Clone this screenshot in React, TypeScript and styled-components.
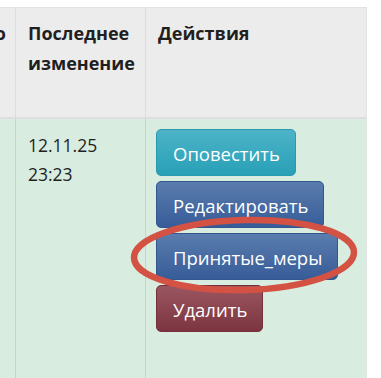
import React from "react";
import styled, { createGlobalStyle } from "styled-components";

const Global = createGlobalStyle`
  html, body { margin: 0; padding: 0; background: #fff; }
  body { font-family: "Open Sans", "Noto Sans", sans-serif; color: #222; }
`;

const Page = styled.div`
  padding-top: 7px;
  width: 381px;
  height: 378px;
  overflow: hidden;
  box-sizing: border-box;
`;

const Table = styled.div`
  display: grid;
  grid-template-columns: 15px 130px 221px;
  grid-template-rows: 111px 260px;
  width: 367px;
  border-top: 1px solid #e2e2e2;
  border-right: 1px solid #e2e2e2;
  box-sizing: border-box;
`;

const HeadCell = styled.div<{ $clip?: boolean }>`
  background: #ececec;
  border-left: ${(p) => (p.$clip ? "none" : "1px solid #dcdcdc")};
  border-bottom: 2px solid #dedede;
  padding: 10px 6px 0 12px;
  font-weight: 700;
  font-size: 18px;
  line-height: 30px;
  color: #1f1f1f;
  overflow: hidden;
  white-space: ${(p) => (p.$clip ? "nowrap" : "normal")};
  display: ${(p) => (p.$clip ? "flex" : "block")};
  justify-content: flex-end;
  ${(p) => (p.$clip ? "padding: 10px 9px 0 0;" : "")}
`;

const BodyCell = styled.div<{ $clip?: boolean }>`
  background: #d8ede0;
  border-left: ${(p) => (p.$clip ? "none" : "1px solid #bcd8c7")};
  padding: 12px 8px 0 12px;
  font-size: 17.5px;
  line-height: 29px;
  color: #1f1f1f;
  position: relative;
`;

const ActionsCell = styled(BodyCell)`
  padding: 10px 0 0 10px;
`;

const Stack = styled.div`
  display: flex;
  flex-direction: column;
  align-items: flex-start;
  gap: 5px;
`;

const variants = {
  info: { top: "#4db3c7", bottom: "#28a0b7", border: "#2a9ab0" },
  primary: { top: "#5a7cae", bottom: "#375c98", border: "#34568e" },
  danger: { top: "#9a5660", bottom: "#7c3540", border: "#74303b" },
};

const Btn = styled.button<{ $v: keyof typeof variants }>`
  font-family: "Open Sans", "Noto Sans", sans-serif;
  font-size: 18.5px;
  line-height: 24px;
  color: #fff;
  padding: 12px 15px 10px 16px;
  border-radius: 5px;
  border: 1px solid ${(p) => variants[p.$v].border};
  background: linear-gradient(${(p) => variants[p.$v].top}, ${(p) => variants[p.$v].bottom});
  cursor: pointer;
  box-sizing: border-box;
  height: 47px;
  white-space: nowrap;
`;

const Mark = styled.svg`
  position: absolute;
  left: -17px;
  top: 97px;
  width: 230px;
  height: 80px;
  pointer-events: none;
  overflow: visible;
`;

export default function App() {
  return (
    <>
      <Global />
      <Page>
        <Table>
          <HeadCell $clip>Ответственно</HeadCell>
          <HeadCell>Последнее изменение</HeadCell>
          <HeadCell>Действия</HeadCell>
          <BodyCell $clip />
          <BodyCell>
            12.11.25
            <br />
            23:23
          </BodyCell>
          <ActionsCell>
            <Stack>
              <Btn $v="info">Оповестить</Btn>
              <Btn $v="primary">Редактировать</Btn>
              <Btn $v="primary">Принятые_меры</Btn>
              <Btn $v="danger">Удалить</Btn>
            </Stack>
            <Mark viewBox="0 0 230 80">
              <ellipse
                cx="115"
                cy="39"
                rx="110"
                ry="35"
                fill="none"
                stroke="#d35243"
                strokeWidth="6.5"
                transform="rotate(-1.5 115 39)"
              />
            </Mark>
          </ActionsCell>
        </Table>
      </Page>
    </>
  );
}
